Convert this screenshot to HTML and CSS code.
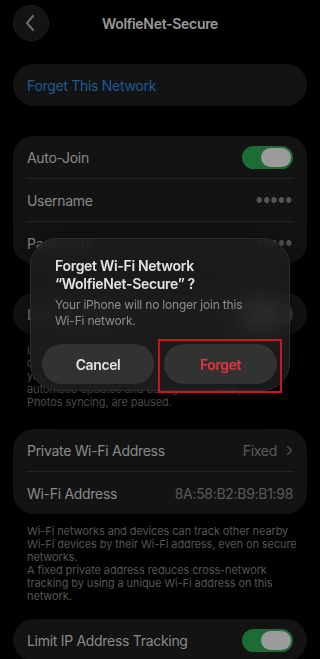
FILE: index.html
```html
<!DOCTYPE html>
<html lang="en">
<head>
    <meta charset="UTF-8">
    <meta name="viewport" content="width=device-width, initial-scale=1.0">
    <title>WolfieNet-Secure</title>
    <link rel="stylesheet" href="styles.css">
</head>
<body>
    <div class="screen">
        <header class="nav">
            <button class="back" aria-label="Back">
                <svg width="12" height="18" viewBox="0 0 12 18"><path d="M9 2 L3 9 L9 16" fill="none" stroke="#6a6a6a" stroke-width="2.2" stroke-linecap="round" stroke-linejoin="round"/></svg>
            </button>
            <h1 class="title">WolfieNet-Secure</h1>
        </header>

        <div class="group single">
            <div class="row"><span class="link">Forget This Network</span></div>
        </div>

        <div class="group">
            <div class="row"><span>Auto-Join</span><span class="toggle on"><i></i></span></div>
            <div class="row"><span>Username</span><span class="dots">●●●●●</span></div>
            <div class="row"><span>Password</span><span class="dots">●●●●●</span></div>
        </div>

        <div class="group low">
            <div class="row"><span>Low Data Mode</span><span class="toggle off"><i></i></span></div>
        </div>
        <p class="note">Low Data Mode helps reduce your iPhone data<br>cellular network or specific Wi-Fi networks<br>you select. When Low Data Mode is on,<br>automatic updates and background tasks,<br>Photos syncing, are paused.</p>

        <div class="group after-note">
            <div class="row"><span>Private Wi-Fi Address</span><span class="value">Fixed <svg width="7" height="11" viewBox="0 0 7 11"><path d="M1.5 1.5 L5.5 5.5 L1.5 9.5" fill="none" stroke="#4c4c4c" stroke-width="1.5" stroke-linecap="round" stroke-linejoin="round"/></svg></span></div>
            <div class="row"><span>Wi-Fi Address</span><span class="value">8A:58:B2:B9:B1:98</span></div>
        </div>
        <p class="note second">Wi-Fi networks and devices can track other nearby<br>Wi-Fi devices by their Wi-Fi address, even on secure<br>networks.<br>A fixed private address reduces cross-network<br>tracking by using a unique Wi-Fi address on this<br>network.</p>

        <div class="group after-note last">
            <div class="row"><span>Limit IP Address Tracking</span><span class="toggle on"><i></i></span></div>
        </div>

        <div class="alert">
            <h2 class="alert-title">Forget Wi-Fi Network<br>“WolfieNet-Secure” ?</h2>
            <p class="alert-msg">Your iPhone will no longer join this<br>Wi-Fi network.</p>
            <div class="alert-actions">
                <button class="pill cancel">Cancel</button>
                <span class="highlight"><button class="pill danger">Forget</button></span>
            </div>
        </div>
    </div>
</body>
</html>
```

FILE: styles.css
```css
body {
    margin: 0;
    background-color: #000;
    font-family: Inter, "Liberation Sans", sans-serif;
    letter-spacing: -0.3px;
    color: #8a8a8a;
}
.screen {
    position: relative;
    width: 320px;
    height: 659px;
    overflow: hidden;
    padding: 0 13px;
    box-sizing: border-box;
}
.nav {
    display: flex;
    align-items: center;
    height: 46px;
}
.back {
    width: 36px;
    height: 36px;
    border-radius: 50%;
    border: 1px solid #1e1e1e;
    background-color: #131313;
    display: flex;
    align-items: center;
    justify-content: center;
    padding: 0 2px 0 0;
}
.title {
    flex: 1;
    margin: 0 36px 0 0;
    text-align: center;
    font-size: 14px;
    font-weight: 600;
    color: #9a9a9a;
}
.group {
    background-color: #131313;
    border-radius: 21px;
    padding: 0 14px;
    margin-top: 30px;
}
.single {
    margin-top: 18px;
}
.low {
    margin-top: 29px;
}
.after-note {
    margin-top: 20px;
}
.last {
    margin-top: 16px;
}
.row {
    display: flex;
    align-items: center;
    justify-content: space-between;
    height: 42px;
    font-size: 14px;
    border-top: 1px solid #232323;
}
.row:first-child {
    border-top: none;
}
.link {
    color: #1d5b95;
}
.dots {
    color: #555;
    font-size: 7px;
    letter-spacing: 1px;
}
.value {
    color: #5a5a5a;
    display: flex;
    align-items: center;
    gap: 9px;
}
.toggle {
    width: 51px;
    height: 23px;
    border-radius: 12px;
    display: flex;
    align-items: center;
    padding: 0 2px;
    box-sizing: border-box;
}
.toggle i {
    width: 30px;
    height: 19px;
    border-radius: 10px;
    background-color: #9b9b9b;
}
.toggle.on {
    background-color: #1e6c35;
    justify-content: flex-end;
}
.toggle.off {
    background-color: #3a3a3a;
}
.toggle.off i {
    background-color: #d8d8d8;
}
.note {
    margin: 9px 0 0;
    padding: 0 14px;
    font-size: 11px;
    line-height: 13px;
    letter-spacing: -0.1px;
    white-space: nowrap;
    color: #555;
}
.note.second {
    margin-top: 11px;
}
.alert {
    position: absolute;
    left: 30px;
    top: 238px;
    width: 260px;
    height: 153px;
    box-sizing: border-box;
    padding: 18px 0 0 24px;
    border-radius: 28px;
    border: 1px solid #2c2c2c;
    background-color: rgba(30, 30, 30, 0.82);
    backdrop-filter: blur(14px);
    box-shadow: 0 4px 30px rgba(0, 0, 0, 0.5);
}
.alert-title {
    margin: 0;
    font-size: 14px;
    line-height: 18px;
    font-weight: 600;
    color: #e4e4e4;
}
.alert-msg {
    margin: 4px 0 0;
    font-size: 12px;
    line-height: 16px;
    letter-spacing: -0.2px;
    color: #8e8e8e;
}
.alert-actions {
    display: flex;
    align-items: flex-start;
    margin: 10px 0 0 -13px;
}
.pill {
    flex: none;
    width: 112px;
    height: 40px;
    border: none;
    border-radius: 20px;
    background-color: #323232;
    color: #e2e2e2;
    font-family: inherit;
    font-size: 14px;
    letter-spacing: -0.4px;
    font-weight: 600;
}
.cancel {
    margin-top: 5px;
}
.highlight {
    display: flex;
    flex: none;
    margin-left: 4px;
    padding: 3px 3px 7px 4px;
    border: 2px solid #c8161e;
}
.danger {
    width: 113px;
    color: #e2353f;
}
```
